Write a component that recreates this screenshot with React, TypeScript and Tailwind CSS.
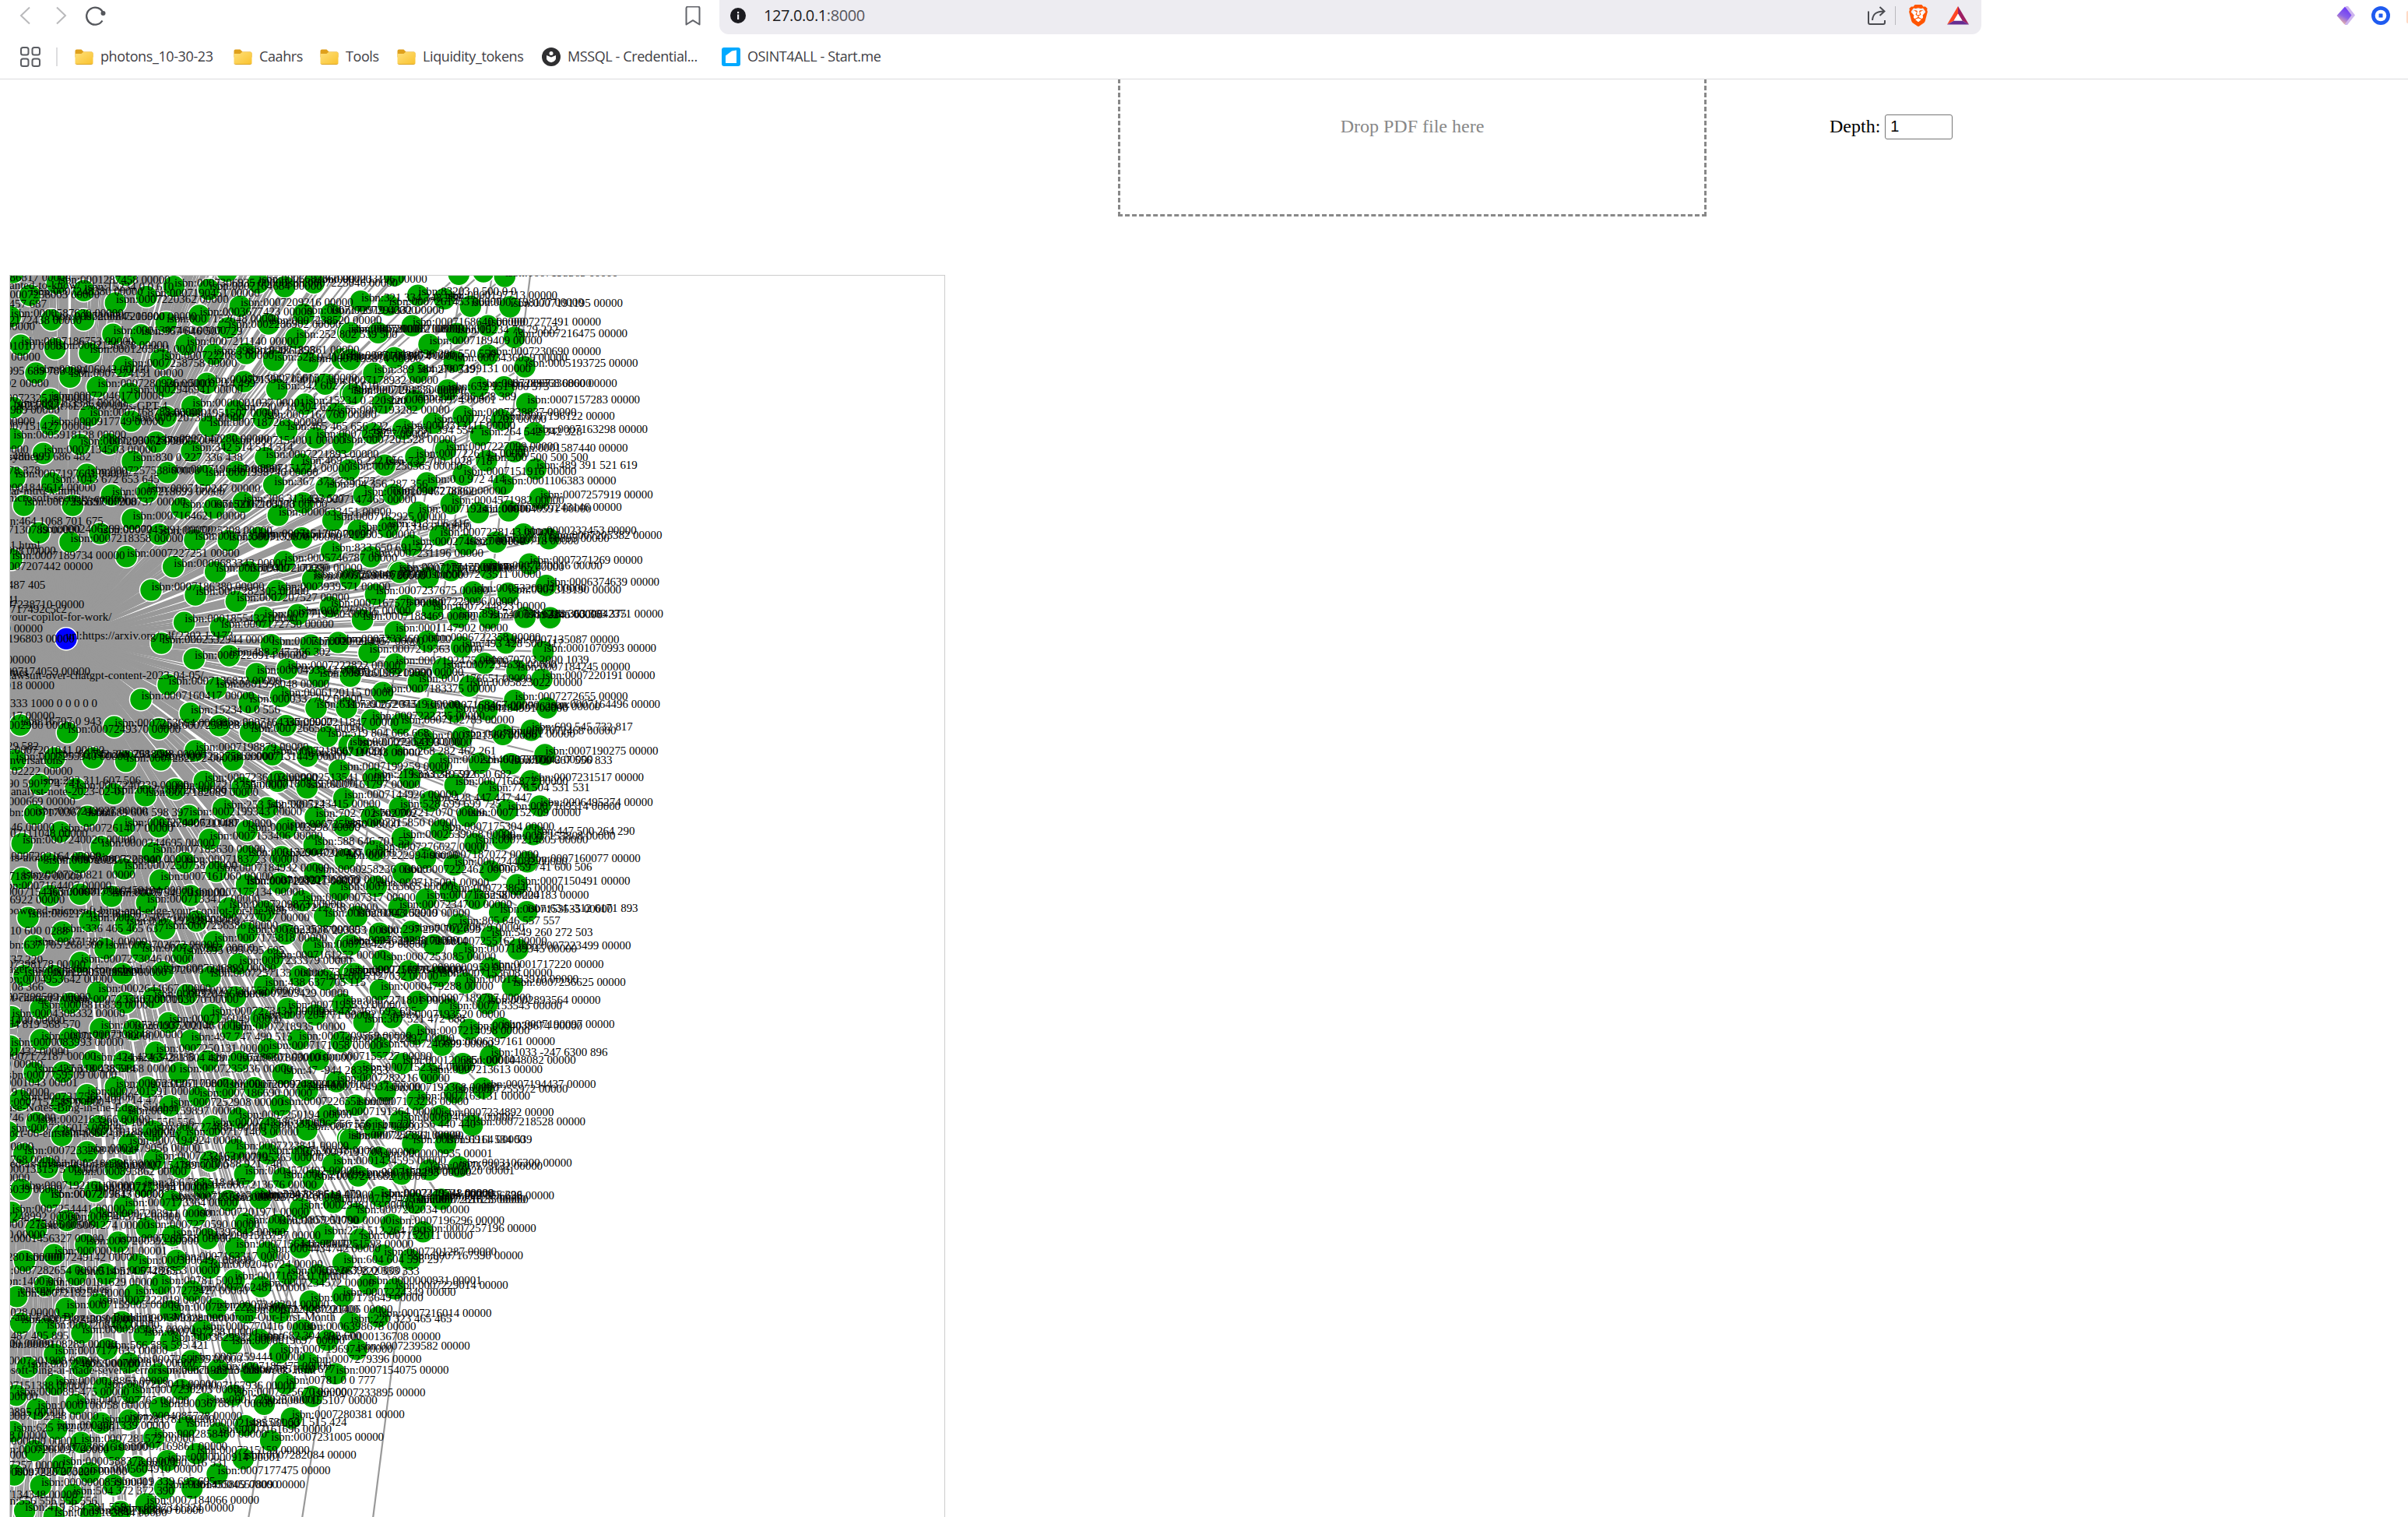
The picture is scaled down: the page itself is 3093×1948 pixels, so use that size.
import React from "react";
import { SiBrave } from "react-icons/si";

type Point = { x: number; y: number };
type Node = Point & { label: string };

/* ---------- graph data ---------- */

// Nodes are stored per tile, in thirds of a pixel from the tile's origin: "x,y,label".
// A bare seven digit label is short for an ISBN of the form 000ddddddd 00000.
const TILES: { x: number; y: number; data: string }[] = [
  {
    x: 0,
    y: 340,
    data: `115,118,7248380|485,40,7210655|220,72,1287458|323,100,15234 0 0 610|50,30,|445,147,7220362|565,122,7190451|670,83,7306935|805,95,7164684|875,25,|995,70,6682360|1097,85,|1210,70,7233196|925,160,7209216|768,195,3677423|1170,190,7172919|1275,190,7294332|40,200,0587630|198,212,7200845|322,212,7215900|640,222,7152648|435,268,1307460|543,270,367 646 507 729|878,243,2286902|1035,228,7238520|1140,282,252 802 539 500|1340,262,7201087|80,310,7186753|212,323,2156178|345,340,1265841|718,308,7211140|620,363,7222083|822,345,398 818 486 355|948,342,7189861|1055,368,522 0 414 610|1187,375,7193874|1318,362,7166345|477,392,7258758|138,417,0406042|270,433,7274151|375,470,7280926|638,470,500 0 414 499|797,457,7215962|940,450,7156157|1067,480,342 602 714 610|1253,460,|1350,495,|500,495,2946941|195,518,7204617|740,545,0000001037 00001|50,550,|1175,537,15234 0 220 220|908,562,730 718 304 652|345,582,7168788|505,602,7207309|640,585,1951507|1015,592,7167760|1297,572,7193282|195,617,0917749|807,622,7187263|1105,637,465 465 656 222|1217,667,7259077|50,670,5918128|308,692,7293062|420,690,7237967|602,683,7147280|738,717,342 514 514 514|893,690,7154001|1322,687,7201528|167,727,7134503|1023,743,7221893|1162,768,469 556 222 656|510,757,830 0 227 336 438|57,820,7197661|335,807,7257538|645,800,7196467|790,812,1998746|912,797,7151721|1055,848,367 373 733 577|1345,790,7250365|1257,857,904 356 287 356|200,840,1043 672 653 645|430,887,7218699|567,877,7150247|92,927,7255397|280,927,7208737|700,937,7152162|825,937,7103173|937,915,306 313 433 527|1168,917,7147465|510,980,7164621|1072,965,0633451|1283,985,7162925|150,1033,2406209|270,1068,7218358|385,1035,7245891|613,1038,7225308|750,1060,7135009|880,1063,7153676|997,1050,7151767|1163,1052,7219505|487,1124,7227251|45,1135,7189734|1277,1103,833 650 691 522|1095,1143,5746787|668,1163,0683343|830,1183,7094172|960,1183,7172280|1210,1205,`,
  },
  {
    x: 450,
    y: 340,
    data: `40,140,321 334 348 288|170,42,7213000|147,155,7261453|260,118,83203 0 500 0 0|362,131,0197713|418,37,|513,27,|595,45,7198365|463,160,7198177|615,162,7191195|238,235,7168640|107,262,7210871|0,262,7201087|530,235,7277491|410,265,15234 76 79 222|632,280,7216475|303,307,7189409|170,358,836 286 550 550|0,365,7119874|400,372,3436059|530,348,7230690|672,393,5193725|90,418,389 584 278 339|260,415,7199131|10,498,7261330|375,482,652 951 600 575|493,470,7289368|592,470,7336860|125,533,0000000974 00001|248,523,298 486 478 389|680,535,7157283|435,583,7238837|320,610,7261203|583,597,7196122|85,650,700 791 394 554|203,633,3313111|502,657,264 542 342 328|710,647,7163298|367,713,7227099|252,740,7226145|633,720,1587440|133,772,732 700 1028 718|525,755,500 500 500 500|715,787,489 391 521 619|435,810,7151916|590,845,1106383|295,840,0 0 972 414|730,900,7257919|52,888,0163467|165,885,7278362|388,920,4571982|262,953,7192411|493,955,1640591|610,948,7243146|30,1022,7133637|145,1012,413 506 416|345,1043,7228143|667,1037,0232453|765,1055,7205382|237,1080,2746827|445,1078,1640718|562,1068,7166895|78,1125,7231196|690,1153,7271269|185,1180,7177475|388,1178,7178065|535,1173,7270016`,
  },
  {
    x: 0,
    y: 740,
    data: `582,53,7186380|753,72,7282305|910,97,7207527|1068,55,3939571|1205,12,|710,178,1855432|850,197,7172750|1017,158,7719960|1147,148,|1273,118,7167575|622,258,2532944|1045,263,7170020|1197,265,|1303,255,|748,318,7220914|883,306,488 347 366 302|988,375,0493342|1107,358,7222822|1230,387,|1350,385,7219990|648,418,7136833|833,430,1998048|543,475,7160417|1082,463,6120115|960,487,0337702|1218,508,631 729 252 315|1335,507,7207319|733,527,15234 0 0 556|78,573,16797 0 943|440,580,7253664|260,602,7249370|612,587,7258588|845,575,7164337|965,600,7266565|1102,575,7211847|1262,617,519 804 666 668|753,672,7198879|60,708,7255940|210,700,66 742 268 298 298|358,700,7618048|485,713,7232272|620,707,7232758|897,708,7131449|1050,688,7219667|1185,693,7116443|1307,747,7199259|1345,650,|153,802,293 311 607 506|292,818,7240239|438,838,7189726|560,845,7182689|675,820,7213755|787,790,7236102|933,813,7180839|1070,790,2513541|1183,815,|1325,855,7144926|860,895,253 542 530 512|1030,892,7243415|133,917,7243927|337,925,689 606 598 397|728,922,2199343|1215,927,702 702 702 702|478,962,7274406|612,965,7211487|232,985,7261407|952,980,4103998|1103,970,7252850|1325,962,7215850|85,1030,7240026|807,1013,7153406|1210,1035,588 646 701 557|390,1042,0244695|587,1065,7185630|955,1078,1329040|1085,1080,7210427|187,1107,7202116|307,1103,7223940|713,1103,7183723|1330,1090,7222994|478,1127,7250758|833,1137,7184932|1213,1143,0258236|85,1163,7250821|617,1170,7161060|948,1185,|1078,1183,7168879`,
  },
  {
    x: 450,
    y: 740,
    data: `97,70,7237675|213,112,7229096|317,130,7244823|473,60,5320904|608,65,7319190|755,35,6374639|300,5,|190,-15,|0,10,|47,168,7188469|418,158,899 740 738 648|535,162,7192245|673,158,218 363 363 375|770,160,0842371|173,213,1147902|297,250,6722358|428,272,493 428 500 417|600,257,7135087|743,290,1070993|72,295,7219363|173,338,7192475|517,335,70703 2000 1039|357,355,7234636|642,363,7184245|738,397,7220191|262,407,7176651|458,423,5823022|125,448,7183375|633,478,7272655|292,510,7168467|403,522,4184991|527,515,7162048|758,507,7164496|82,553,7222335|195,568,7132783|697,593,609 545 732 817|588,610,7072468|430,620,7203861|283,628,|32,653,7202393|170,687,268 282 462 261|750,687,7190275|342,720,2214678|498,720,7357342|618,722,100 667 556 833|695,788,7231517|90,778,219 333 219 592|230,778,638 592 650 682|403,805,7166872|532,827,778 504 531 531|308,867,428 447 447 447|190,890,528 699 699 725|730,885,6495274|605,900,7169514|452,925,7152709|82,925,7217070|350,978,7175304|705,995,447 500 264 290|200,1007,2539068|585,1013,7153808|480,1030,7214805|95,1057,7276627|290,1085,7187072|682,1100,7160077|400,1112,7244082|540,1135,359 741 600 506|203,1143,7222462|642,1188,7150491|100,1195,7115001`,
  },
  {
    x: 0,
    y: 1140,
    data: `190,30,|308,25,0459194|430,33,7754070|565,58,7133417|735,30,7175134|950,-12,|1165,50,0007317|1310,10,|882,78,7209873|108,115,2179183|345,128,7225037|485,140,7192428|757,128,7227027|1020,90,7212718|1250,110,0281843|240,170,336 465 465 637|635,158,7256386|952,173,7022538|1100,178,7293353|132,223,7138511|405,235,3702672|825,207,7175818|545,245,7270263|705,255,695 695 695 695|1207,230,7264279|1330,215,7634298|310,287,7273046|1050,273,7161252|920,293,7233379|93,338,7123050|207,338,7209521|472,330,|627,323,7246899|810,343,7257133|1155,340,673 297 268|1253,355,7127032|1345,330,|1020,377,438 637 705 115|377,402,2644667|720,412,7131552|592,423,0320496|907,420,7203429|483,443,7153070|157,465,6816839|270,445,7237407|1108,465,7195559|45,497,4308332|815,488,7273434|1215,490,435 465 695 695|1320,448,7271801|650,520,7156049|1005,503,7204771|387,542,7261935|515,547,7202146|895,550,7218935|157,585,7171077|268,580,7308248|735,587,497 747 490 515|1150,585,7209559|1315,593,7152897|40,610,0083993|600,633,7250131|1035,620,7171058|358,667,424 424 342 188|477,668,265 281 504 429|800,667,7286301|920,668,7863010|1227,662,7155727|132,712,427 318 438 514|242,710,3859868|690,712,7235936|1090,717,47 -944 2833 853|445,767,7231261|567,768,7175807|335,797,7201591|767,805,7186690|870,772,7200924|980,770,7089244|1297,747,7282216|1185,780,7164937|78,818,7317566|237,830,489 401 714 477|655,840,7252908|1082,838,7226551|493,873,7159897|920,887,7250194|1265,875,7191364|142,905,2163966|380,918,3 1000 556 556|590,937,7274681|817,918,0743586|1040,923,335 606 556 556|1182,933,7168114|715,953,7171403|238,955,|30,940,7236013|497,987,7194924|1340,965,|908,1007,7223841|92,1025,7233268|335,1017,2479056|595,1047,7232162|1033,1025,7130248|1162,1033,7191706|1283,1065,1434595|183,1078,7180396|810,1053,7195365|445,1083,7154789|695,1078,710 588 921 748|943,1103,4570492|283,1108,0893862|555,1150,266 783 518 447|1090,1118,|1207,1125,7241682|82,1162,7192161|785,1157,7213676|365,1165,7173618|195,1195,7207613|655,1200,7187327|880,1205,|1000,1195,324 884 614 479`,
  },
  {
    x: 450,
    y: 1140,
    data: `385,15,7238646|292,43,7173258|483,43,7224183|187,77,7234700|25,110,|575,95,7153535|680,92,634 -312 6171 893|418,140,865 646 557 557|112,175,297 297 701 699|235,168,7230879|543,187,549 260 272 503|322,220,7255162|0,220,634 -298 6171 1014|645,237,7223499|437,250,7189345|125,280,7253085|540,308,1717220|225,320,0000000959 00001|15,330,7119784|342,342,7153608|443,367,1433910|625,378,7236625|115,393,0479288|260,437,7189797|528,447,2893564|380,467,7153543|52,518,307 521 472 688|160,500,7193520|582,540,7190097|458,545,4039674|255,565,7214098|115,615,7246699|353,607,6397161|540,647,1033 -247 6300 896|200,677,1206851|433,677,1448082|45,705,7152354|305,715,7213613|510,772,7194437|135,783,7193368|402,790,7255972|257,817,7163131|20,838,7173236|348,878,7234892|192,898,6040931|92,925,228 356 440 440|470,915,7218528|0,968,7245361|240,985,7191164|367,985,6911 534 539|112,1038,0000000935 00001|418,1075,3106300|305,1087,7173132|197,1103,0000001020 00001|30,1110,7152293|118,1190,2479748|350,1198,522 355 396|240,1215,7261623`,
  },
  {
    x: 0,
    y: 1540,
    data: `195,-5,|45,50,7254441|365,-30,|480,28,7173364|660,5,|755,63,7201971|258,82,5463741|380,70,7203911|140,113,5061274|565,110,7270590|665,140,1397843|945,93,7031859|1072,97,7251790|1157,35,2948103|1003,-3,|1285,12,|800,152,1513757|1248,135,272 512 264 790|330,175,7200592|455,165,7289568|908,187,7156441|208,213,0000001021 00001|95,238,7249142|1030,203,4434742|1157,187,7251593|533,250,3006497|680,235,7163317|808,265,2046724|1322,245,604 604 598 297|293,292,514 514 574 265|408,288,4283553|903,310,7165831|1107,287,7226398|1225,290,667 222 333 333|173,333,0101629|620,327,00781 500 0|520,367,7272427|740,353,7262481|1005,337,7234572|65,375,7218258|380,403,7222019|1320,373,7224349|255,420,7159005|1195,392,7173649|657,430,7231222|832,420,7240304|947,437,7221280|1077,437,7221406|470,472,7309328|80,478,7182130|178,498,7208483|315,515,0965683|780,505,6770416|1167,503,6398678|555,525,7497238|658,545,3629922|1000,540,682 304 892 600|893,557,0019697|1262,543,0136708|412,577,566 585 595 421|210,597,7177633|1078,592,7196974|738,622,7259444|497,630,7259135|1188,630,7279396|105,647,7240755|315,645,7001819|610,672,7198213|840,657,7186475|967,668,7851616 677|1293,672,7154075|213,715,0018863|400,725,7213041|1100,710,00781 0 0 777|507,747,7230203|700,733,7167936|62,755,0895475|900,755,7225670|1203,760,7233895|293,790,7307765|793,787,1729028|1018,790,7155107|143,808,0106058|617,802,3678817|1123,843,7280381|390,862,7281781|497,850,4085728|945,872,531 531 515 424|218,885,2081339|50,895,625 702 671 986|717,877,0021485|842,900,7161696|593,918,2858460|1043,930,7231005|312,937,7281572|440,965,7169861|133,968,7230816|757,980,7215159|240,1023,0588373|645,1007,0000000914 00001|937,1000,7282084|530,1030,0 390 316 531|837,1058,7177475|55,1062,7273220|345,1053,5604910|157,1103,0000000859 00001|438,1100,419 339 695 695|635,1113,1455809|740,1113,4557809|280,1137,504 372 372 390|563,1173,7184066|95,1200,419 354 591 559|350,1213,7183860|465,1203,7341324|208,1222,7183844`,
  },
  {
    x: 400,
    y: 1540,
    data: `173,55,7202034|308,97,7196296|430,125,7257196|187,153,7152011|278,215,7201287|380,232,7167390|220,327,0000000931 00001|322,345,7229014|258,453,7216014|150,475,220 323 465 465|175,578,7239582|400,15,|500,0,7196638|265,-10,`,
  },
];

// Labels of nodes beyond the left edge: "right end,middle,text", in the same units.
const TRAILING: { y: number; data: string }[] = [
  {
    y: 340,
    data: `273,50,isbn:0007186817 00000|310,80,wanted-to-know/|385,118,isbn:0007258003 00000|180,152,isbn:333 457 687|315,217,isbn:0002172438 00000|135,240,isbn:0007164430 00000|260,315,isbn:0000001010 00001|155,357,isbn:0007218872 00000|330,412,isbn:718995 689 788 290|188,460,isbn:0007188992 00000|350,517,isbn:0007232518 00000|645,545,2023/03/It%E2%80%99s-GPT-4|230,562,isbn:0007216989 00000|135,605,isbn:0007206601 00000|350,625,isbn:0007151427 00000|110,713,isbn:0007186000 00000|350,740,isbn:480 999 686 482|170,740,bing-sydney/|155,795,isbn:338 278 378|370,862,isbn:0001846614 00000|305,873,openai-intro-x.html|490,900,microsoft-security-control|398,990,isbn:464 1068 701 675|310,1023,isbn:0007130789 00000|155,1083,story-1.html|215,1105,isbn:0007212998 00000|358,1165,isbn:0007207442 00000`,
  },
  {
    y: 740,
    data: `175,37,isbn:895 487 405|72,92,isbn:0 41|325,110,isbn:0007238710 00000|258,130,a1bf717492c5c2|430,160,your-copilot-for-work/|165,204,isbn:0007223509 00000|288,243,isbn:0007196803 00000|138,324,isbn:0007194400 00000|348,370,isbn:0007174059 00000|110,373,the-times|785,385,lawsuit-over-chatgpt-content-2023-04-05/|210,424,isbn:0007221018 00000|375,492,isbn:333 1000 0 0 0 0 0|210,540,isbn:0007238317 00000|290,575,isbn:0007002900 00000|150,657,isbn:529 582|403,673,isbn:0007201041 00000|242,710,conversations|280,753,isbn:0007102222 00000|310,802,isbn:390 590 774 741|485,830,analyst-note-2023-02-01|290,870,isbn:0000000669 00000|440,912,isbn:0007170367 00000|210,968,isbn:0007240546 00000|338,992,isbn:0007111048 00000|450,1085,others-along-the-new-Bing|390,1080,isbn:0007202164 00000|315,1158,isbn:0007187626 00000|430,1195,isbn:0007164407 00000`,
  },
  {
    y: 1140,
    data: `370,18,isbn:0007154463 00000|250,48,isbn:0007186922 00000|1105,90,-ai-powered-microsoft-bing-and-edge-your-copilot-for-the-web|262,168,isbn:810 600 0288|395,223,isbn:637 705 268 300|165,280,isbn:737 220|330,298,isbn:0007398178 00000|550,315,teenager-used-chatbot-for-school|435,355,isbn:0004953642 00000|168,385,isbn:108 366|340,425,ft-chatgpt-human|350,422,isbn:0007208599 00000|250,512,isbn:0007181400 00000|310,528,isbn:564 819 568 570|265,633,isbn:0007221432 00000|370,650,isbn:0007172187 00000|165,680,isbn:0007100700 00000|450,723,isbn:0007759509 00000|300,752,isbn:0000001043 00001|190,790,isbn:0007212119 00000|400,828,isbn:0007152585 00000|685,848,ease-Notes-Bing-in-the-Edge-Sidebar|215,888,isbn:0007238746 00000|700,947,oct-06-einstein-nobel-prize-relativity|130,1000,isbn:0007200000 00000|555,1065,used-as-invisible-for-searching|230,1050,isbn:0007209768 00000|375,1085,isbn:0001331575 00000|115,1118,isbn:0007230000 00000|240,1165,isbn:0007195039 00000`,
  },
  {
    y: 1540,
    data: `305,68,isbn:0007248992 00000|370,100,isbn:0007275485 00000|175,137,isbn:0007212000 00000|400,152,isbn:0001456327 00000|240,225,isbn:0007282801 00000|400,275,isbn:0007282654 00000|240,318,isbn:1400 0 0|420,347,energy-secret-rules|230,437,isbn:0007191028 00000|1293,457,Bing-and-Edge-Blog-post-Building-on-Momentum-from-Our-First-Month|265,528,isbn:487 405 895|450,562,isbn:0009108289 00000|205,558,isbn:0007220100 00000|380,625,isbn:0007201908 00000|1218,660,microsoft-bing-ai-made-several-errors-in-launch-demo-last-week-.html|330,720,isbn:0007151388 00000|145,763,isbn:0007210000 00000|245,823,isbn:0007240895 00000|380,838,isbn:0007192348 00000|180,912,isbn:0007220008 00000|300,932,isbn:0000000000 00001|105,988,isbn:0007218000 00000|420,965,isbn:0007260097 00000|248,1025,isbn:0007237257 00000|345,1053,isbn:0000097220 00000|300,1140,isbn:0007134348 00000|375,1165,isbn:556 556 556 556`,
  },
];

// Small deterministic generator, so the graph looks the same on every render.
function createRandom(seed: number) {
  let s = seed;
  return () => {
    s = (s * 1664525 + 1013904223) % 4294967296;
    return s / 4294967296;
  };
}

const random = createRandom(42);

function expandLabel(raw: string): string {
  if (raw === "") return `isbn:000${7150000 + Math.floor(random() * 130000)} 00000`;
  if (/^\d{7}$/.test(raw)) return `isbn:000${raw} 00000`;
  return `isbn:${raw}`;
}

const NODES: Node[] = TILES.flatMap((tile) =>
  tile.data.split("|").map((item) => {
    const [x, y, label] = item.split(",");
    return { x: tile.x + Number(x) / 3, y: tile.y + Number(y) / 3, label: expandLabel(label) };
  }),
);

const TRAILING_LABELS: Node[] = TRAILING.flatMap((group) =>
  group.data.split("|").map((item) => {
    const [x, y, label] = item.split(",");
    return { x: Number(x) / 3, y: group.y + (Number(y) + 12) / 3, label };
  }),
);

// Link targets that lie outside of the visible part of the canvas.
function scatter(x0: number, x1: number, y0: number, y1: number): Point[] {
  const points: Point[] = [];
  for (let y = y0; y < y1; y += 42) {
    for (let x = x0; x < x1; x += 42) {
      points.push({ x: x + random() * 38, y: y + random() * 38 });
    }
  }
  return points;
}

const HIDDEN: Point[] = [
  ...scatter(-700, 560, -260, 330),
  ...scatter(-700, 380, -560, -260),
  ...scatter(-600, -10, 350, 1960),
  ...scatter(-500, 200, 1970, 2240),
  ...scatter(-300, 60, 2240, 2500),
];

const ROOT: Point = { x: 85, y: 820.3 };

const LONG_LINKS = [
  [681, 354, 479, 1950],
  [632, 354, 388, 1950],
  [595, 354, 319, 1950],
];

function Graph() {
  return (
    <svg className="block h-full w-full" viewBox="13 354 1200 1594" preserveAspectRatio="xMinYMin slice">
      <g stroke="#999999" strokeWidth="2.2">
        {LONG_LINKS.map(([x1, y1, x2, y2]) => (
          <line key={x1} x1={x1} y1={y1} x2={x2} y2={y2} />
        ))}
        {[...HIDDEN, ...NODES].map((p, i) => (
          <line key={i} x1={ROOT.x} y1={ROOT.y} x2={p.x} y2={p.y} />
        ))}
      </g>
      <g fill="#00aa00" stroke="#ffffff" strokeWidth="1.5">
        {NODES.map((n, i) => (
          <circle key={i} cx={n.x} cy={n.y} r="14.5" />
        ))}
        <circle cx={ROOT.x} cy={ROOT.y} r="14.5" fill="#0000ff" />
      </g>
      <g fill="#000000" fontFamily='"Liberation Serif", serif' fontSize="14.95">
        {NODES.map((n, i) => (
          <text key={i} x={n.x + 0.6} y={n.y}>
            {n.label}
          </text>
        ))}
        {TRAILING_LABELS.map((n, i) => (
          <text key={i} x={n.x} y={n.y} textAnchor="end">
            {n.label}
          </text>
        ))}
        <text x={ROOT.x} y={ROOT.y + 0.7}>
          url:https://arxiv.org/pdf/2302.12173
        </text>
      </g>
    </svg>
  );
}

/* ---------- browser chrome ---------- */

function FolderIcon() {
  return (
    <svg className="h-6 w-6" viewBox="0 0 24 24">
      <defs>
        <linearGradient id="folder" x1="0" y1="0" x2="1" y2="1">
          <stop offset="0" stopColor="#ffe07a" />
          <stop offset="1" stopColor="#f9c22e" />
        </linearGradient>
      </defs>
      <path d="M0.5 4.5a2 2 0 0 1 2-2h6l3 3h10a2 2 0 0 1 2 2v5H0.5z" fill="#dfa01c" />
      <path d="M0.5 8h8l2.5-2.300h10.500a2 2 0 0 1 2 2V19.500a2 2 0 0 1-2 2h-19a2 2 0 0 1-2-2z" fill="url(#folder)" />
      <path d="M1 20.700q.6.900 1.500.900h19q.9 0 1.500-.9" fill="none" stroke="#d9a01f" strokeWidth="1" />
    </svg>
  );
}

function Bookmark({ width, icon, children }: { width: string; icon: React.ReactNode; children: string }) {
  return (
    <div className={`flex items-center gap-2 whitespace-nowrap ${width}`}>
      <span className="flex w-[26px] shrink-0 justify-center">{icon}</span>
      <span>{children}</span>
    </div>
  );
}

function Toolbar() {
  return (
    <div className="flex h-11 items-start">
      <div className="flex w-[924px] shrink-0 items-start pt-2">
        <svg className="ml-6 h-6 w-[18px]" viewBox="0 0 18 24" fill="none" stroke="#b9b9bb" strokeWidth="2">
          <path d="M14 1.500 3 12l11 10.500" />
        </svg>
        <svg className="ml-7 h-6 w-[18px]" viewBox="0 0 18 24" fill="none" stroke="#b9b9bb" strokeWidth="2">
          <path d="M3 1.500 14 12 3 22.500" />
        </svg>
        <svg className="ml-[21px] h-[26px] w-7" viewBox="0 0 28 26" fill="none" stroke="#55575c" strokeWidth="2.300">
          <path d="M22.500 18.500a11 11 0 1 1 1.200-9" />
          <circle cx="23.500" cy="9" r="3" fill="#55575c" stroke="none" />
        </svg>
        <svg className="ml-[743px] h-[26px] w-5" viewBox="0 0 20 26" fill="none" stroke="#62646a" strokeWidth="2">
          <path d="M1.500 2.500a2 2 0 0 1 2-2h13a2 2 0 0 1 2 2V23.500L10 18.200l-8.500 5.300z" strokeLinejoin="round" />
        </svg>
      </div>
      <div className="flex h-11 w-[1621px] shrink-0 items-center rounded-b-xl bg-[#edecf1] pb-1 pl-3.5">
        <svg className="h-5 w-5" viewBox="0 0 20 20">
          <circle cx="10" cy="10" r="10" fill="#1b1b20" />
          <path d="M9 8.500h2.200V15H9zM9 5h2.200v2.200H9z" fill="#edecf1" />
        </svg>
        <span className="ml-[23px] text-[20px] tracking-[-0.4px] text-[#1b1b20]">
          127.0.0.1<span className="text-[#55555c]">:8000</span>
        </span>
        <div className="ml-auto flex items-center pr-4">
          <svg className="h-[26px] w-[26px]" viewBox="0 0 26 26" fill="none" stroke="#4a4b50" strokeWidth="2">
            <path d="M2 7.500V22a2 2 0 0 0 2 2h17a2 2 0 0 0 2-2v-3" />
            <path d="M7 19C7.500 11 12 7.500 22 7.500M16.500 2l6 5.500-6 5.500" />
          </svg>
          <span className="ml-[10px] h-6 w-px bg-[#b9b9be]" />
          <span className="relative ml-4 flex h-7 w-[26px] items-center justify-center">
            <span className="absolute h-4 w-3.5 rounded-md bg-white" />
            <SiBrave className="relative h-7 w-7 shrink-0 text-[#ff5500]" />
          </span>
          <svg className="ml-6 h-6 w-7" viewBox="0 0 28 24">
            <path d="M14 0 0 23.500 9 18.500 14 10z" fill="#ff4724" />
            <path d="M14 0 28 23.500 19.500 18.500 14 10z" fill="#9e1f63" />
            <path d="M0 23.500h28l-8.500-5H9z" fill="#662d91" />
            <path d="M14 9.500 19.500 18.500H8.500z" fill="#ffffff" />
          </svg>
        </div>
      </div>
      <div className="ml-auto flex items-start pt-2">
        <svg className="h-6 w-6" viewBox="0 0 24 24">
          <defs>
            <linearGradient id="gem" x1="0.7" y1="0.1" x2="0.3" y2="1">
              <stop offset="0" stopColor="#6f3bf5" />
              <stop offset="0.5" stopColor="#8b62e8" />
              <stop offset="1" stopColor="#fbc49a" />
            </linearGradient>
          </defs>
          <path d="M12 0h3l9 11.500L14 24h-3z" fill="#cdb4ee" />
          <path d="M11 0.500 19.500 11.500 10.500 23.500 0.500 12z" fill="url(#gem)" />
        </svg>
        <svg className="mr-[20px] ml-5 h-[26px] w-[26px]" viewBox="0 0 26 26">
          <circle cx="13" cy="12" r="12" fill="#1f5bf0" />
          <circle cx="13" cy="12" r="7.300" fill="#ffffff" />
          <rect x="10.500" y="9.500" width="5" height="5" rx="0.500" fill="#1f5bf0" />
        </svg>
        <span className="mt-1.5 h-4 w-0.5 rounded-l bg-[#ffd9c4]" />
      </div>
    </div>
  );
}

function BookmarksBar() {
  return (
    <div className="flex h-[58px] items-center border-b border-[#dcdcde] text-[18px] tracking-[-0.4px] text-[#3f4045]">
      <svg className="ml-[26px] h-[26px] w-[26px]" viewBox="0 0 26 26" fill="none" stroke="#5b5d63" strokeWidth="2">
        <rect x="1" y="1" width="9.500" height="9.500" rx="2.500" />
        <rect x="15.500" y="1" width="9.500" height="9.500" rx="2.500" />
        <rect x="1" y="15.500" width="9.500" height="9.500" rx="2.500" />
        <rect x="15.500" y="15.500" width="9.500" height="9.500" rx="2.500" />
      </svg>
      <span className="mr-[21px] ml-5 h-6 w-0.5 bg-[#dddddf]" />
      <Bookmark width="w-[204px]" icon={<FolderIcon />}>
        photons_10-30-23
      </Bookmark>
      <Bookmark width="w-[111px]" icon={<FolderIcon />}>
        Caahrs
      </Bookmark>
      <Bookmark width="w-[99px]" icon={<FolderIcon />}>
        Tools
      </Bookmark>
      <Bookmark width="w-[186px]" icon={<FolderIcon />}>
        Liquidity_tokens
      </Bookmark>
      <Bookmark
        width="w-[231px]"
        icon={
          <svg className="h-6 w-6" viewBox="0 0 24 24">
            <circle cx="12" cy="12" r="12" fill="#2f2f31" />
            <path d="M6 10 12 12.500l6-2.500v4c0 2.600-3 4.400-6 5.200-3-.8-6-2.600-6-5.200z" fill="#ffffff" />
            <circle cx="12" cy="7.500" r="2.500" fill="#ffffff" />
          </svg>
        }
      >
        MSSQL - Credential...
      </Bookmark>
      <Bookmark
        width="w-[210px]"
        icon={
          <svg className="h-6 w-6" viewBox="0 0 24 24">
            <rect width="24" height="24" rx="3" fill="#00a9ff" />
            <path d="M5 20V10.500l8-6 6-1V20z" fill="#ffffff" />
          </svg>
        }
      >
        OSINT4ALL - Start.me
      </Bookmark>
    </div>
  );
}

export default function App() {
  return (
    <div className="flex h-[1948px] w-[3093px] flex-col overflow-hidden bg-white font-['Open_Sans','Noto_Sans',sans-serif]">
      <header className="shrink-0">
        <Toolbar />
        <BookmarksBar />
      </header>
      <main className="flex grow flex-col overflow-hidden font-['Liberation_Serif',serif] text-2xl text-black">
        <section className="-mt-[55px] flex h-[306px] shrink-0 items-start pl-[1436px]">
          <div className="flex h-[231px] w-[756px] shrink-0 items-center justify-center border-[3px] border-dashed border-[#888888] pb-0.5 text-[#888888]">
            Drop PDF file here
          </div>
          <label className="ml-[158px] flex h-[231px] items-center gap-1.5">
            <span className="pb-0.5">Depth:</span>
            <input
              type="text"
              defaultValue="1"
              className="h-8 w-[87px] rounded-[3px] border border-[#767676] bg-white px-1.5 font-['Liberation_Sans',sans-serif] text-xl leading-none outline-none"
            />
          </label>
        </section>
        <section className="ml-3 h-[1800px] w-[1202px] shrink-0 border border-[#cccccc]">
          <div className="h-[1594px] w-[1200px]">
            <Graph />
          </div>
        </section>
      </main>
    </div>
  );
}
